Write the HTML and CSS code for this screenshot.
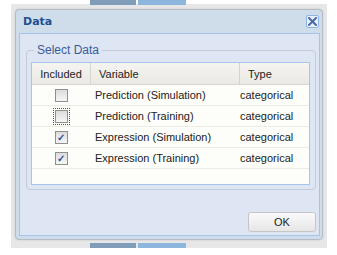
FILE: index.html
```html
<!DOCTYPE html>
<html lang="en">
<head>
  <meta charset="UTF-8">
  <title>Data</title>
  <link rel="stylesheet" href="styles.css">
</head>
<body>
  <div class="backdrop">
    <div class="tabs top">
      <div class="tab slate"></div>
      <div class="tab blue"></div>
    </div>
    <div class="tabs bottom">
      <div class="tab slate"></div>
      <div class="tab blue"></div>
    </div>
  </div>

  <div class="dialog">
    <div class="titlebar">
      <span class="title">Data</span>
      <span class="close">
        <svg width="9" height="9" viewBox="0 0 9 9">
          <path d="M1 1 L8 8 M8 1 L1 8" stroke="#4a6aa8" stroke-width="2" stroke-linecap="square"/>
        </svg>
      </span>
    </div>
    <div class="content">
      <fieldset class="group">
        <legend>Select Data</legend>
        <div class="grid">
          <div class="row head">
            <div class="cell c1">Included</div>
            <div class="cell c2">Variable</div>
            <div class="cell c3">Type</div>
          </div>
          <div class="row">
            <div class="cell c1"><span class="check"></span></div>
            <div class="cell c2">Prediction (Simulation)</div>
            <div class="cell c3">categorical</div>
          </div>
          <div class="row">
            <div class="cell c1"><span class="check focus"></span></div>
            <div class="cell c2">Prediction (Training)</div>
            <div class="cell c3">categorical</div>
          </div>
          <div class="row">
            <div class="cell c1"><span class="check on">&#10003;</span></div>
            <div class="cell c2">Expression (Simulation)</div>
            <div class="cell c3">categorical</div>
          </div>
          <div class="row">
            <div class="cell c1"><span class="check on">&#10003;</span></div>
            <div class="cell c2">Expression (Training)</div>
            <div class="cell c3">categorical</div>
          </div>
        </div>
      </fieldset>
      <div class="buttons">
        <button class="ok">OK</button>
      </div>
    </div>
  </div>
</body>
</html>
```

FILE: styles.css
```css
body {
  margin: 0;
  width: 337px;
  height: 255px;
  background: #fff;
  font-family: "Liberation Sans", Arial, sans-serif;
  font-size: 11px;
  color: #222;
  overflow: hidden;
}

.backdrop {
  position: absolute;
  left: 11px;
  top: 4px;
  width: 316px;
  height: 244px;
  background: #e7e7e7;
  display: flex;
  flex-direction: column;
  justify-content: space-between;
}

.tabs {
  display: flex;
  gap: 2px;
  height: 5px;
  padding-left: 79px;
}

.tabs.top {
  margin-top: -4px;
}

.tab.slate {
  width: 46px;
  background: #7f9cb8;
}

.tab.blue {
  width: 48px;
  background: #8db6de;
}

.dialog {
  position: absolute;
  left: 15px;
  top: 9px;
  width: 306px;
  height: 229px;
  border: 1px solid #b3bcc7;
  border-radius: 4px;
  background: #cfdcea;
  display: flex;
  flex-direction: column;
  box-shadow: 0 0 2px rgba(0, 0, 0, 0.15);
}

.titlebar {
  height: 23px;
  display: flex;
  align-items: center;
  justify-content: space-between;
  padding: 0 3px 0 7px;
}

.title {
  font-family: "DejaVu Sans", sans-serif;
  font-weight: bold;
  font-size: 11px;
  color: #1f4e93;
}

.close {
  width: 11px;
  height: 11px;
  border: 1px solid #8fb4e4;
  border-radius: 2px;
  background: #e8f0fa;
  display: flex;
  align-items: center;
  justify-content: center;
}

.content {
  flex: 1;
  margin: 0 2px 3px 3px;
  border: 1px solid #a6c4ea;
  background: #dde6f2;
  padding: 9px 3px 0 6px;
  display: flex;
  flex-direction: column;
}

.group {
  margin: 0;
  padding: 0 5px 4px 4px;
  border: 1px solid #c4cbd6;
  border-radius: 4px;
}

.group legend {
  color: #3c5b9b;
  font-size: 12px;
  padding: 0 3px;
  margin-left: 3px;
}

.grid {
  margin-top: 5px;
  height: 121px;
  border: 1px solid #a9c6ea;
  background: #fdfdf9;
}

.row {
  display: flex;
  height: 20px;
  border-bottom: 1px solid #ebebe6;
}

.row.head {
  height: 21px;
  background: linear-gradient(#f5f4f1, #ebe9e4);
  border-bottom: 1px solid #d8d6d0;
}

.cell {
  display: flex;
  align-items: center;
  padding-left: 5px;
}

.head .cell {
  padding-left: 8px;
}

.head .c1,
.head .c2 {
  border-right: 1px solid #d6d4ce;
}

.c1 {
  width: 58px;
  padding-left: 0;
  justify-content: center;
}

.head .c1 {
  padding-left: 0;
}

.c2 {
  width: 140px;
}

.c3 {
  flex: 1;
}

.check {
  width: 11px;
  height: 11px;
  border: 1px solid #8e8f8f;
  background: linear-gradient(#dcdcdc, #f6f6f6);
  font-size: 10px;
  line-height: 11px;
  text-align: center;
  color: #2b4fa8;
  font-weight: bold;
}

.check.focus {
  outline: 1px dotted #555;
  outline-offset: 1px;
}

.buttons {
  flex: 1;
  display: flex;
  justify-content: flex-end;
  align-items: flex-end;
  padding-bottom: 3px;
}

.ok {
  width: 68px;
  height: 20px;
  border: 1px solid #c6c6c6;
  border-radius: 3px;
  background: linear-gradient(#fafafa, #e6e6e6);
  font-family: "Liberation Sans", Arial, sans-serif;
  font-size: 11px;
  color: #222;
}
```
